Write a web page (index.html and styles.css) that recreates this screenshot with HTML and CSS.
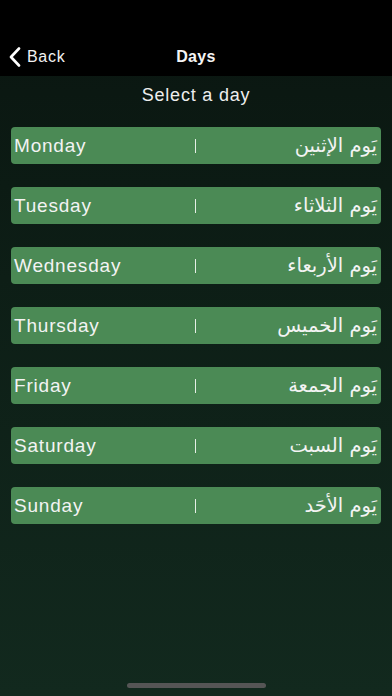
FILE: index.html
```html
<!DOCTYPE html>
<html lang="en">
<head>
<meta charset="utf-8">
<title>Days</title>
<link rel="stylesheet" href="styles.css">
</head>
<body>
<div class="screen">
  <header class="header">
    <div class="nav">
      <div class="back">
        <svg class="chev" width="14" height="20" viewBox="0 0 14 20"><path d="M11 1.5 L3 10 L11 18.5" fill="none" stroke="#fff" stroke-width="2.6" stroke-linecap="round" stroke-linejoin="round"/></svg>
        <span class="back-text">Back</span>
      </div>
      <div class="title">Days</div>
    </div>
  </header>
  <main class="main">
    <div class="subtitle">Select a day</div>
    <ul class="list">
      <li class="row"><span class="en">Monday</span><span class="sep"></span><span class="ar" dir="rtl">يَوم الإثنين</span></li>
      <li class="row"><span class="en">Tuesday</span><span class="sep"></span><span class="ar" dir="rtl">يَوم الثلاثاء</span></li>
      <li class="row"><span class="en">Wednesday</span><span class="sep"></span><span class="ar" dir="rtl">يَوم الأربعاء</span></li>
      <li class="row"><span class="en">Thursday</span><span class="sep"></span><span class="ar" dir="rtl">يَوم الخميس</span></li>
      <li class="row"><span class="en">Friday</span><span class="sep"></span><span class="ar" dir="rtl">يَوم الجمعة</span></li>
      <li class="row"><span class="en">Saturday</span><span class="sep"></span><span class="ar" dir="rtl">يَوم السبت</span></li>
      <li class="row"><span class="en">Sunday</span><span class="sep"></span><span class="ar" dir="rtl">يَوم الأحَد</span></li>
    </ul>
  </main>
  <div class="home-bar"></div>
</div>
</body>
</html>
```
FILE: styles.css
```css
* { box-sizing: border-box; }
html, body {
  margin: 0;
  padding: 0;
  background: #000;
}
body {
  font-family: "Liberation Sans", "DejaVu Sans", Arial, sans-serif;
  color: #fff;
}
.screen {
  width: 392px;
  height: 696px;
  display: flex;
  flex-direction: column;
  background: linear-gradient(to bottom, #0a1510 0%, #0d1e16 40%, #12291e 100%);
  overflow: hidden;
}
.header {
  background: #000;
  height: 76px;
  padding-top: 38px;
  flex: none;
}
.nav {
  position: relative;
  height: 38px;
  display: flex;
  align-items: center;
  justify-content: center;
}
.back {
  position: absolute;
  left: 8px;
  top: 0;
  height: 38px;
  display: flex;
  align-items: center;
  gap: 5px;
}
.chev { display: block; }
.back-text {
  font-size: 16px;
  letter-spacing: 0.7px;
  color: #f2f2f2;
}
.title {
  font-size: 16px;
  font-weight: bold;
  letter-spacing: 0.3px;
  color: #f4f4f4;
}
.main {
  flex: 1;
  padding: 0 11px;
}
.subtitle {
  margin-top: 7px;
  height: 24px;
  line-height: 24px;
  text-align: center;
  font-size: 18px;
  letter-spacing: 0.8px;
  color: #eeeeee;
}
.list {
  list-style: none;
  margin: 20px 0 0;
  padding: 0;
  display: flex;
  flex-direction: column;
  gap: 23px;
}
.row {
  height: 37px;
  background: #4b8a55;
  border-radius: 4px;
  display: grid;
  grid-template-columns: 1fr auto 1fr;
  align-items: center;
  padding: 0 4px 0 3px;
}
.en {
  font-size: 19px;
  letter-spacing: 0.8px;
  color: #f3f3f3;
}
.sep {
  width: 1.5px;
  height: 14px;
  background: #e6efe6;
}
.ar {
  font-family: "DejaVu Sans", sans-serif;
  font-size: 19.5px;
  color: #f3f3f3;
  text-align: right;
  justify-self: end;
}
.home-bar {
  flex: none;
  width: 139px;
  height: 5px;
  border-radius: 3px;
  background: #555;
  margin: 0 auto 8px;
}
```
